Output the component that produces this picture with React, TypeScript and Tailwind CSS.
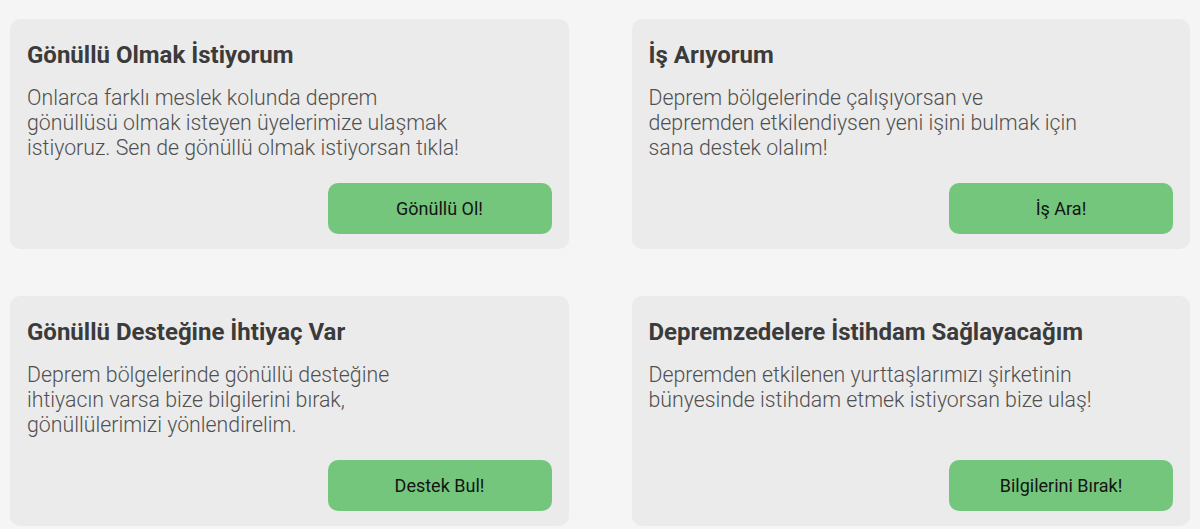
const cards = [
  {
    title: "Gönüllü Olmak İstiyorum",
    lines: [
      "Onlarca farklı meslek kolunda deprem",
      "gönüllüsü olmak isteyen üyelerimize ulaşmak",
      "istiyoruz. Sen de gönüllü olmak istiyorsan tıkla!",
    ],
    button: "Gönüllü Ol!",
  },
  {
    title: "İş Arıyorum",
    lines: [
      "Deprem bölgelerinde çalışıyorsan ve",
      "depremden etkilendiysen yeni işini bulmak için",
      "sana destek olalım!",
    ],
    button: "İş Ara!",
  },
  {
    title: "Gönüllü Desteğine İhtiyaç Var",
    lines: [
      "Deprem bölgelerinde gönüllü desteğine",
      "ihtiyacın varsa bize bilgilerini bırak,",
      "gönüllülerimizi yönlendirelim.",
    ],
    button: "Destek Bul!",
  },
  {
    title: "Depremzedelere İstihdam Sağlayacağım",
    lines: [
      "Depremden etkilenen yurttaşlarımızı şirketinin",
      "bünyesinde istihdam etmek istiyorsan bize ulaş!",
    ],
    button: "Bilgilerini Bırak!",
  },
];

function Card({ title, lines, button }: { title: string; lines: string[]; button: string }) {
  return (
    <div className="flex flex-col rounded-[10px] bg-[#ebebeb] px-[17px] pt-[21px] pb-[15px]">
      <h3 className="text-[24px] leading-[30px] font-bold text-[#3b3b3b]">{title}</h3>
      <p className="mt-[15px] font-['Roboto_Light','Roboto',sans-serif] text-[21.3px] leading-[25px] font-light text-[#505050]">
        {lines.map((l, i) => (
          <span key={i} className="block whitespace-nowrap">
            {l}
          </span>
        ))}
      </p>
      <div className="mt-auto flex justify-end pt-[23px]">
        <button className="h-[51px] w-[224px] rounded-[10px] bg-[#74c67c] text-[18px] text-[#141414]">
          {button}
        </button>
      </div>
    </div>
  );
}

export default function App() {
  return (
    <div className="min-h-screen bg-[#f5f5f5] px-[10px] pt-[19px] font-['Roboto',sans-serif]">
      <div className="grid grid-cols-2 gap-x-[63px] gap-y-[47px]">
        {cards.map((c) => (
          <Card key={c.title} {...c} />
        ))}
      </div>
    </div>
  );
}
